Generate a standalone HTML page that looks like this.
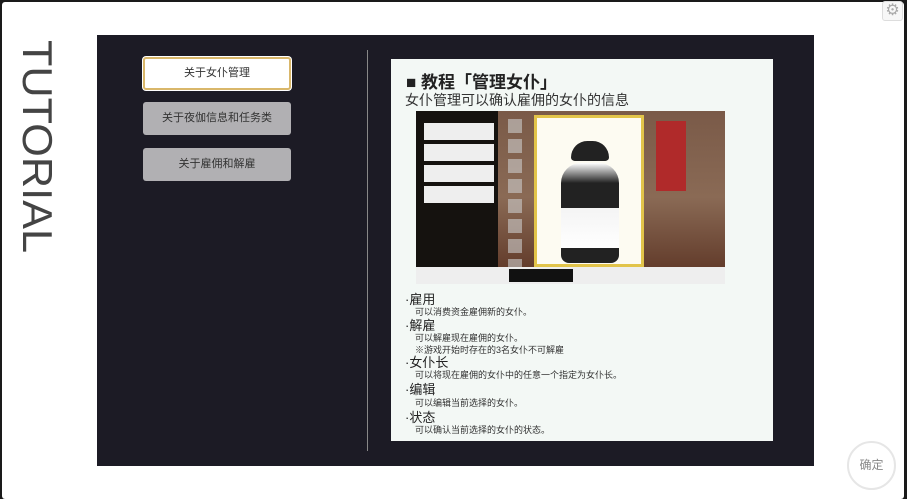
<!DOCTYPE html>
<html><head><meta charset="utf-8"><style>
*{margin:0;padding:0;box-sizing:border-box}
body{width:907px;height:499px;background:#1a1a1a;position:relative;overflow:hidden;font-family:"Liberation Sans","Noto Sans CJK SC",sans-serif}
.frame{position:absolute;left:2px;top:2px;width:902px;height:497px;background:#fff;border-radius:3px}
.tut{position:absolute;left:10px;top:40px;width:60px;height:220px}
.panel{position:absolute;left:97px;top:35px;width:717px;height:431px;background:#1c1b25}
.btn{position:absolute;left:143px;width:148px;height:33px;border-radius:3px;background:#b1b0b3;color:#333;font-size:11px;text-align:center;line-height:33px}
.b1{top:57px;background:#fff;border:2px solid #d9b76a;box-shadow:0 0 0 1px #fff;line-height:29px}
.div{position:absolute;left:367px;top:50px;width:1px;height:401px;background:#888}
.doc{position:absolute;left:391px;top:59px;width:382px;height:382px;background:#f3f8f5;color:#222}
.h{position:absolute;left:15px;top:9px;font-size:17px;font-weight:bold}
.s{position:absolute;left:14px;top:31px;font-size:14px;color:#333}
.shot{position:absolute;left:25px;top:52px;width:309px;height:173px;background:linear-gradient(180deg,#7a5a48 0,#8a6a55 50%,#5a3222 100%);overflow:hidden}
.l{position:absolute;left:14px;font-size:13px;color:#222}
.d{position:absolute;left:24px;font-size:9px;color:#333}
.ok{position:absolute;left:847px;top:441px;width:49px;height:49px;border-radius:50%;border:2px solid #e6e6e6;background:#fff;color:#888;font-size:12px;text-align:center;line-height:45px}
.gear{position:absolute;left:882px;top:1px;width:21px;height:20px;border:1px solid #ddd;border-radius:3px;background:#f7f7f7;color:#aaa;font-size:16px;text-align:center;line-height:18px}
</style></head><body>
<div class="frame"></div>
<svg class="tut" viewBox="0 0 60 220"><text transform="translate(13,0) rotate(90)" font-family="Liberation Sans" font-size="42" fill="#444" textLength="213" lengthAdjust="spacingAndGlyphs">TUTORIAL</text></svg>
<div class="gear">⚙</div>
<div class="panel"></div>
<div class="btn b1">关于女仆管理</div>
<div class="btn" style="top:102px">关于夜伽信息和任务类</div>
<div class="btn" style="top:148px">关于雇佣和解雇</div>
<div class="div"></div>
<div class="doc">
<div class="h">■ 教程「管理女仆」</div>
<div class="s">女仆管理可以确认雇佣的女仆的信息</div>
<div class="shot">
 <div style="position:absolute;left:0;top:0;width:82px;height:173px;background:#15120f"></div>
 <div style="position:absolute;left:8px;top:12px;width:70px;height:17px;background:#eee"></div>
 <div style="position:absolute;left:8px;top:33px;width:70px;height:17px;background:#eee"></div>
 <div style="position:absolute;left:8px;top:54px;width:70px;height:17px;background:#eee"></div>
 <div style="position:absolute;left:8px;top:75px;width:70px;height:17px;background:#eee"></div>
 <div style="position:absolute;left:92px;top:8px;width:14px;height:150px;background:repeating-linear-gradient(#ccc 0 14px,transparent 14px 20px);opacity:.6"></div>
 <div style="position:absolute;left:240px;top:10px;width:30px;height:70px;background:#b02a2a"></div>
 <div style="position:absolute;left:118px;top:4px;width:110px;height:152px;background:#fdfbf2;border:3px solid #e2c44a"></div>
 <div style="position:absolute;left:155px;top:30px;width:38px;height:20px;background:#222;border-radius:18px 18px 4px 4px"></div>
 <div style="position:absolute;left:145px;top:52px;width:58px;height:100px;background:linear-gradient(#fff 0,#222 20%,#222 45%,#f4f4f4 45%,#fff 85%,#222 85%);border-radius:20px 20px 8px 8px"></div>
 <div style="position:absolute;left:0;top:156px;width:309px;height:17px;background:#eee"></div>
 <div style="position:absolute;left:93px;top:158px;width:64px;height:13px;background:#111"></div>
</div>
<div class="l" style="top:230px">·雇用</div>
<div class="d" style="top:246px">可以消费资金雇佣新的女仆。</div>
<div class="l" style="top:256px">·解雇</div>
<div class="d" style="top:272px">可以解雇现在雇佣的女仆。</div>
<div class="d" style="top:284px">※游戏开始时存在的3名女仆不可解雇</div>
<div class="l" style="top:293px">·女仆长</div>
<div class="d" style="top:309px">可以将现在雇佣的女仆中的任意一个指定为女仆长。</div>
<div class="l" style="top:320px">·编辑</div>
<div class="d" style="top:337px">可以编辑当前选择的女仆。</div>
<div class="l" style="top:348px">·状态</div>
<div class="d" style="top:364px">可以确认当前选择的女仆的状态。</div>
</div>
<div class="ok">确定</div>
</body></html>
